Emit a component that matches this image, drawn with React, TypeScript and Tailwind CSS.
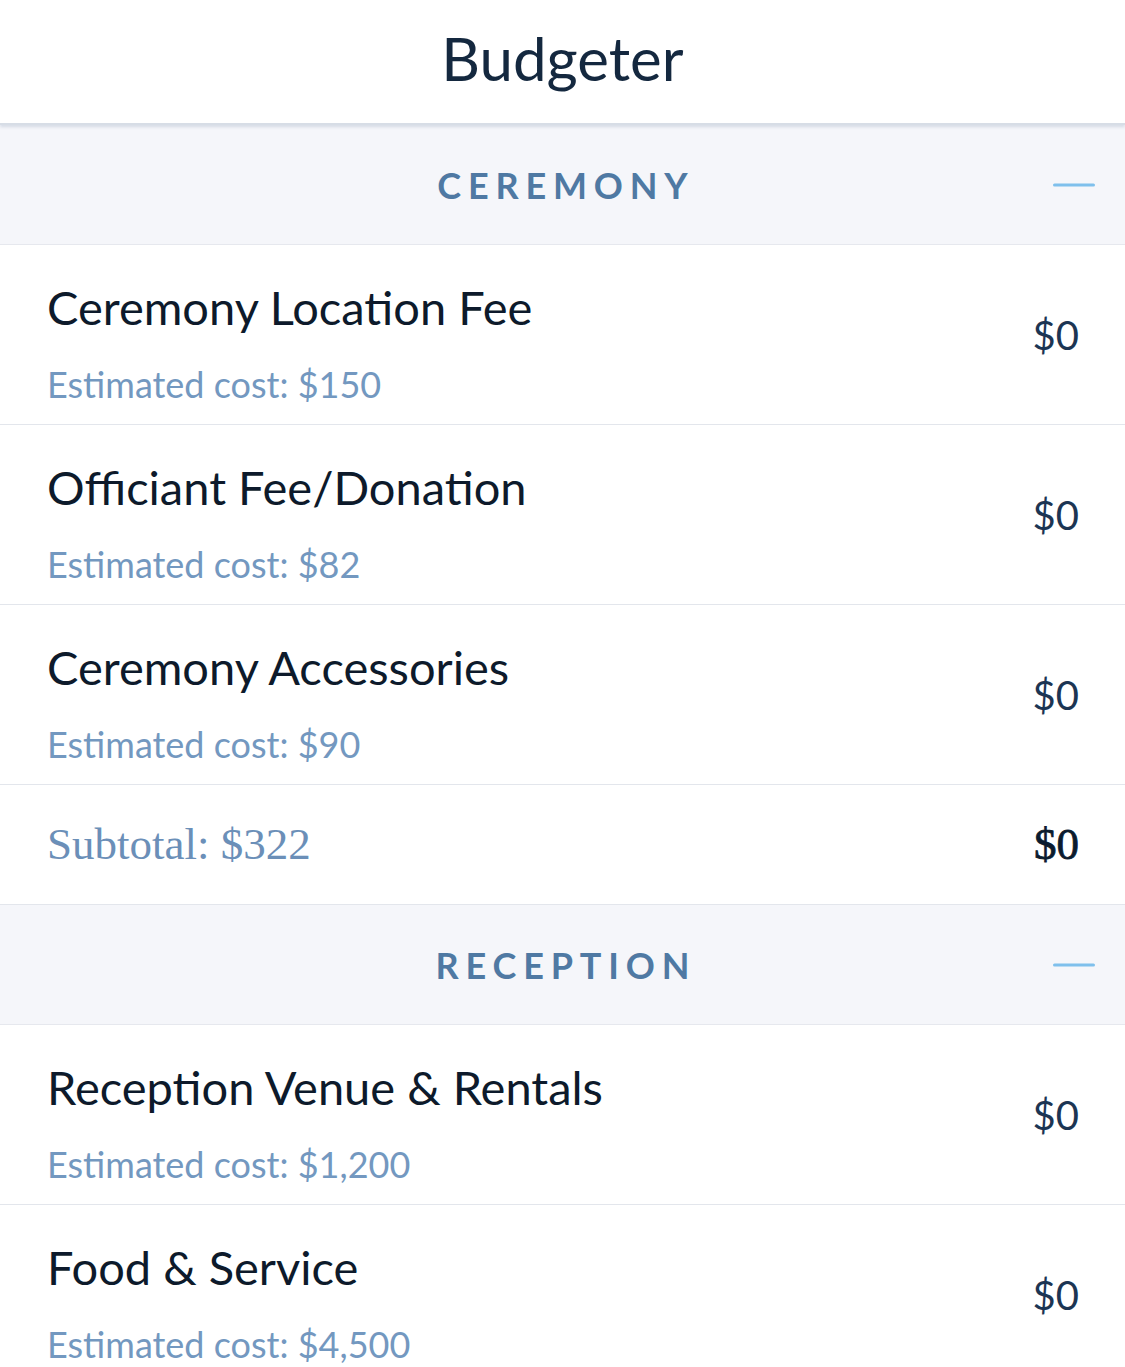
import React from "react";

type Item = { name: string; estimate: string; amount: string };

const ceremony: Item[] = [
  { name: "Ceremony Location Fee", estimate: "$150", amount: "$0" },
  { name: "Officiant Fee/Donation", estimate: "$82", amount: "$0" },
  { name: "Ceremony Accessories", estimate: "$90", amount: "$0" },
];

const reception: Item[] = [
  { name: "Reception Venue & Rentals", estimate: "$1,200", amount: "$0" },
  { name: "Food & Service", estimate: "$4,500", amount: "$0" },
];

export default function App() {
  return (
    <div className="w-[1125px] h-[1367px] overflow-hidden bg-white font-['Lato','Open_Sans',sans-serif]">
      {/* Header */}
      <div className="h-[125px] flex items-center justify-center border-b-2 border-[#d7dde6] shadow-[0_2px_3px_rgba(120,140,170,0.25)] relative z-10">
        <h1 className="text-[60px] text-[#14283f] leading-none pb-2">Budgeter</h1>
      </div>

      <SectionHeader title="CEREMONY" />
      {ceremony.map((item) => (
        <Row key={item.name} item={item} />
      ))}
      <div className="h-[120px] flex items-center justify-between pl-[47px] pr-[46px] border-b border-[#e3e6ec]">
        <span className="font-['Liberation_Serif',serif] text-[45px] text-[#6b8fb8]">Subtotal: $322</span>
        <span className="font-['Liberation_Serif',serif] text-[45px] text-[#0b1b2e] [-webkit-text-stroke:0.8px_#0b1b2e]">$0</span>
      </div>

      <SectionHeader title="RECEPTION" />
      {reception.map((item) => (
        <Row key={item.name} item={item} />
      ))}
    </div>
  );
}

function SectionHeader({ title }: { title: string }) {
  return (
    <div className="h-[120px] bg-[#f5f6fa] border-b border-[#e6e8ee] flex items-center justify-center relative">
      <span className="text-[36px] font-bold tracking-[0.19em] text-[#4f79a3] pl-[0.19em]">{title}</span>
      <div className="absolute right-[30px] top-1/2 -translate-y-1/2 w-[42px] h-[3px] rounded-full bg-[#7fc0ec]" />
    </div>
  );
}

function Row({ item }: { item: Item }) {
  return (
    <div className="h-[180px] flex items-center justify-between pl-[47px] pr-[46px] border-b border-[#e3e6ec]">
      <div className="flex flex-col gap-[35px] pt-[16px]">
        <span className="text-[47px] leading-none text-[#0d1a2b]">{item.name}</span>
        <span className="text-[36px] leading-none text-[#7398c0]">Estimated cost: {item.estimate}</span>
      </div>
      <span className="text-[40px] text-[#1c3553]">{item.amount}</span>
    </div>
  );
}
